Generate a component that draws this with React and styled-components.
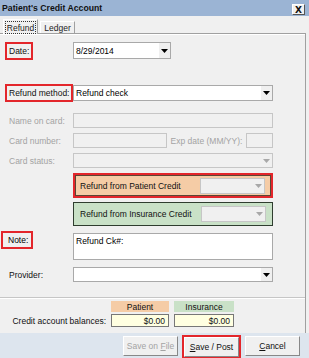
import React from 'react'
import styled, { createGlobalStyle } from 'styled-components'

const GlobalStyle = createGlobalStyle`
  html, body {
    margin: 0;
    padding: 0;
    background: #f0f0f0;
  }
  body {
    font-family: "Liberation Sans", Arial, sans-serif;
    font-size: 8.5px;
    color: #000;
  }
`

function Arrow({ disabled }) {
  return (
    <svg width="7" height="4" viewBox="0 0 7 4">
      <polygon points="0,0 7,0 3.5,4" fill={disabled ? '#a8a8a8' : '#000'} />
    </svg>
  )
}

function Combo({ value, width, height, disabled }) {
  return (
    <ComboBox $width={width} $height={height} $disabled={disabled}>
      <ComboText>{value}</ComboText>
      <ComboButton>
        <Arrow disabled={disabled} />
      </ComboButton>
    </ComboBox>
  )
}

function Field({ label, marked, disabled }) {
  return (
    <Label $disabled={disabled}>
      <LabelText $marked={marked}>{label}</LabelText>
    </Label>
  )
}

export default function App() {
  return (
    <>
      <GlobalStyle />
      <Window>
        <TitleBar>
          <span>Patient's Credit Account</span>
          <CloseButton>X</CloseButton>
        </TitleBar>

        <TabStrip>
          <Tab $active>
            <TabFocus>Refund</TabFocus>
          </Tab>
          <Tab>Ledger</Tab>
        </TabStrip>

        <Panel>
          <Form>
            <Row $gap={8}>
              <Field label="Date:" marked />
              <Combo value="8/29/2014" width={98} height={17} />
            </Row>

            <Row $gap={26}>
              <Field label="Refund method:" marked />
              <Combo value="Refund check" width={200} height={16} />
            </Row>

            <Row $gap={12}>
              <Field label="Name on card:" disabled />
              <Input $width={200} $height={15} $disabled />
            </Row>

            <Row $gap={5}>
              <Field label="Card number:" disabled />
              <Split>
                <Input $width={94} $height={15} $disabled />
                <Label $disabled>Exp date (MM/YY):</Label>
                <Input $width={27} $height={15} $disabled />
              </Split>
            </Row>

            <Row $gap={5}>
              <Field label="Card status:" disabled />
              <Combo width={200} height={15} disabled />
            </Row>

            <Row $gap={5}>
              <span />
              <CreditBox $tone="patient" $marked>
                <span>Refund from Patient Credit</span>
                <Combo width={65} height={16} disabled />
              </CreditBox>
            </Row>

            <Row $gap={4}>
              <span />
              <CreditBox $tone="insurance">
                <span>Refund from Insurance Credit</span>
                <Combo width={65} height={16} disabled />
              </CreditBox>
            </Row>

            <Row $gap={7} $top>
              <NoteLabel>
                <LabelText $marked>Note:</LabelText>
              </NoteLabel>
              <NoteArea>Refund Ck#:</NoteArea>
            </Row>

            <Row $gap={7}>
              <Field label="Provider:" />
              <Combo width={200} height={15} />
            </Row>
          </Form>

          <Balances>
            <span />
            <BalanceHead $tone="patient">Patient</BalanceHead>
            <BalanceHead $tone="insurance">Insurance</BalanceHead>
            <BalanceLabel>Credit account balances:</BalanceLabel>
            <BalanceValue>$0.00</BalanceValue>
            <BalanceValue>$0.00</BalanceValue>
          </Balances>
        </Panel>

        <ButtonBar>
          <Button disabled>Save on <u>F</u>ile</Button>
          <MarkedButton>
            <Button><u>S</u>ave / Post</Button>
          </MarkedButton>
          <Button><u>C</u>ancel</Button>
        </ButtonBar>
      </Window>
    </>
  )
}

const tones = {
  patient: '#f5cca6',
  insurance: '#c9e1c7',
}

const Window = styled.div`
  width: 309px;
  height: 358px;
  display: flex;
  flex-direction: column;
  overflow: hidden;
  background: #f0f0f0;
`

const TitleBar = styled.div`
  height: 16px;
  flex: none;
  display: flex;
  align-items: center;
  justify-content: space-between;
  padding: 0 4px 0 2px;
  background: #9bb4d4;
  font-size: 8.7px;
  font-weight: bold;
  color: #111;
  box-sizing: border-box;
`

const CloseButton = styled.div`
  width: 13px;
  height: 11px;
  margin-top: 3px;
  box-sizing: border-box;
  display: flex;
  align-items: center;
  justify-content: center;
  background: #f0f0f0;
  border: 1px solid #fff;
  border-right-color: #555;
  border-bottom-color: #555;
  font-size: 9px;
  font-weight: bold;
  font-family: "DejaVu Sans", sans-serif;
`

const TabStrip = styled.div`
  height: 17px;
  flex: none;
  display: flex;
  align-items: flex-end;
  gap: 2px;
  padding-left: 3px;
  box-sizing: border-box;
`

const Tab = styled.div`
  height: ${p => (p.$active ? 15 : 12)}px;
  width: ${p => (p.$active ? 35 : 35)}px;
  box-sizing: border-box;
  display: flex;
  align-items: center;
  justify-content: center;
  border: 1px solid #fff;
  border-right-color: #a0a0a0;
  border-bottom: none;
  color: #222;
  margin-bottom: ${p => (p.$active ? -1 : 0)}px;
  background: #f0f0f0;
  position: relative;
`

const TabFocus = styled.span`
  outline: 1px dotted #333;
  outline-offset: 0;
  padding: 1px 1px 0;
`

const Panel = styled.div`
  flex: 1;
  display: flex;
  flex-direction: column;
  border-top: 1px solid #a0a0a0;
  border-right: 1px solid #a0a0a0;
  margin-right: 3px;
  box-shadow: inset 0 1px 0 #fff;
`

const Form = styled.div`
  flex: 1;
  display: flex;
  flex-direction: column;
  padding-left: 9px;
`

const Row = styled.div`
  display: grid;
  grid-template-columns: 64px 200px;
  align-items: ${p => (p.$top ? 'start' : 'center')};
  margin-top: ${p => p.$gap}px;
`

const Label = styled.div`
  color: ${p => (p.$disabled ? '#a3a3a3' : '#111')};
  white-space: nowrap;
`

const LabelText = styled.span`
  display: inline-block;
  padding: 2px 2px;
  margin-left: -2px;
  outline: ${p => (p.$marked ? '2px solid #e3262b' : 'none')};
`

const NoteLabel = styled.div`
  margin-left: -4px;
  padding-top: 0;
  & > span {
    padding: 2px 3px 2px 5px;
  }
`

const ComboBox = styled.div`
  width: ${p => p.$width}px;
  height: ${p => p.$height}px;
  box-sizing: border-box;
  display: flex;
  align-items: stretch;
  background: ${p => (p.$disabled ? '#f0f0f0' : '#fff')};
  border: 1px solid ${p => (p.$disabled ? '#c6c6c6' : '#a9a9a9')};
`

const ComboText = styled.div`
  flex: 1;
  display: flex;
  align-items: center;
  padding-left: 2px;
  white-space: nowrap;
  overflow: hidden;
`

const ComboButton = styled.div`
  width: 11px;
  display: flex;
  align-items: center;
  justify-content: center;
  background: #f0f0f0;
`

const Input = styled.div`
  width: ${p => p.$width}px;
  height: ${p => p.$height}px;
  box-sizing: border-box;
  background: ${p => (p.$disabled ? '#f0f0f0' : '#fff')};
  border: 1px solid ${p => (p.$disabled ? '#c6c6c6' : '#a9a9a9')};
`

const Split = styled.div`
  display: flex;
  align-items: center;
  justify-content: space-between;
  width: 200px;
`

const CreditBox = styled.div`
  width: 200px;
  height: ${p => (p.$marked ? 25 : 24)}px;
  box-sizing: border-box;
  display: flex;
  align-items: center;
  justify-content: space-between;
  padding: 0 6px 0 ${p => (p.$marked ? 5 : 6)}px;
  background: ${p => tones[p.$tone]};
  border: ${p => (p.$marked ? '2px solid #e3262b' : '1px solid #2f3d2f')};
  box-shadow: ${p => (p.$marked ? 'inset 0 0 0 1px #5b4634' : 'none')};
  color: #111;
`

const NoteArea = styled.div`
  width: 200px;
  height: 27px;
  box-sizing: border-box;
  background: #fff;
  border: 1px solid #a9a9a9;
  padding: 2px 2px;
`

const Balances = styled.div`
  height: 36px;
  flex: none;
  box-sizing: border-box;
  border-top: 1px solid #c6c6c6;
  box-shadow: inset 0 1px 0 #fff;
  display: grid;
  grid-template-columns: 98px 58px 60px;
  grid-template-rows: 11px 13px;
  column-gap: 5px;
  row-gap: 2px;
  padding: 3px 0 0 8px;
  align-items: center;
`

const BalanceHead = styled.div`
  height: 11px;
  display: flex;
  align-items: center;
  justify-content: center;
  background: ${p => tones[p.$tone]};
  color: #111;
`

const BalanceLabel = styled.div`
  text-align: right;
  white-space: nowrap;
  color: #111;
`

const BalanceValue = styled.div`
  height: 13px;
  box-sizing: border-box;
  display: flex;
  align-items: center;
  justify-content: flex-end;
  padding-right: 3px;
  background: #ffffe1;
  border: 1px solid #777;
  color: #111;
`

const ButtonBar = styled.div`
  height: 25px;
  flex: none;
  display: flex;
  align-items: center;
  justify-content: flex-end;
  gap: 4px;
  padding-right: 9px;
  background: #dde5ee;
`

const MarkedButton = styled.div`
  border: 2px solid #e3262b;
  display: flex;
  margin-bottom: -2px;
`

const Button = styled.button`
  width: 55px;
  height: 20px;
  box-sizing: border-box;
  font-family: "Liberation Sans", Arial, sans-serif;
  font-size: 8.5px;
  color: ${p => (p.disabled ? '#a3a3a3' : '#111')};
  background: #f0f0f0;
  border: 1px solid #fff;
  border-right-color: #888;
  border-bottom-color: #888;
  padding: 0;
  text-align: center;

  u {
    text-decoration: underline;
  }
`
